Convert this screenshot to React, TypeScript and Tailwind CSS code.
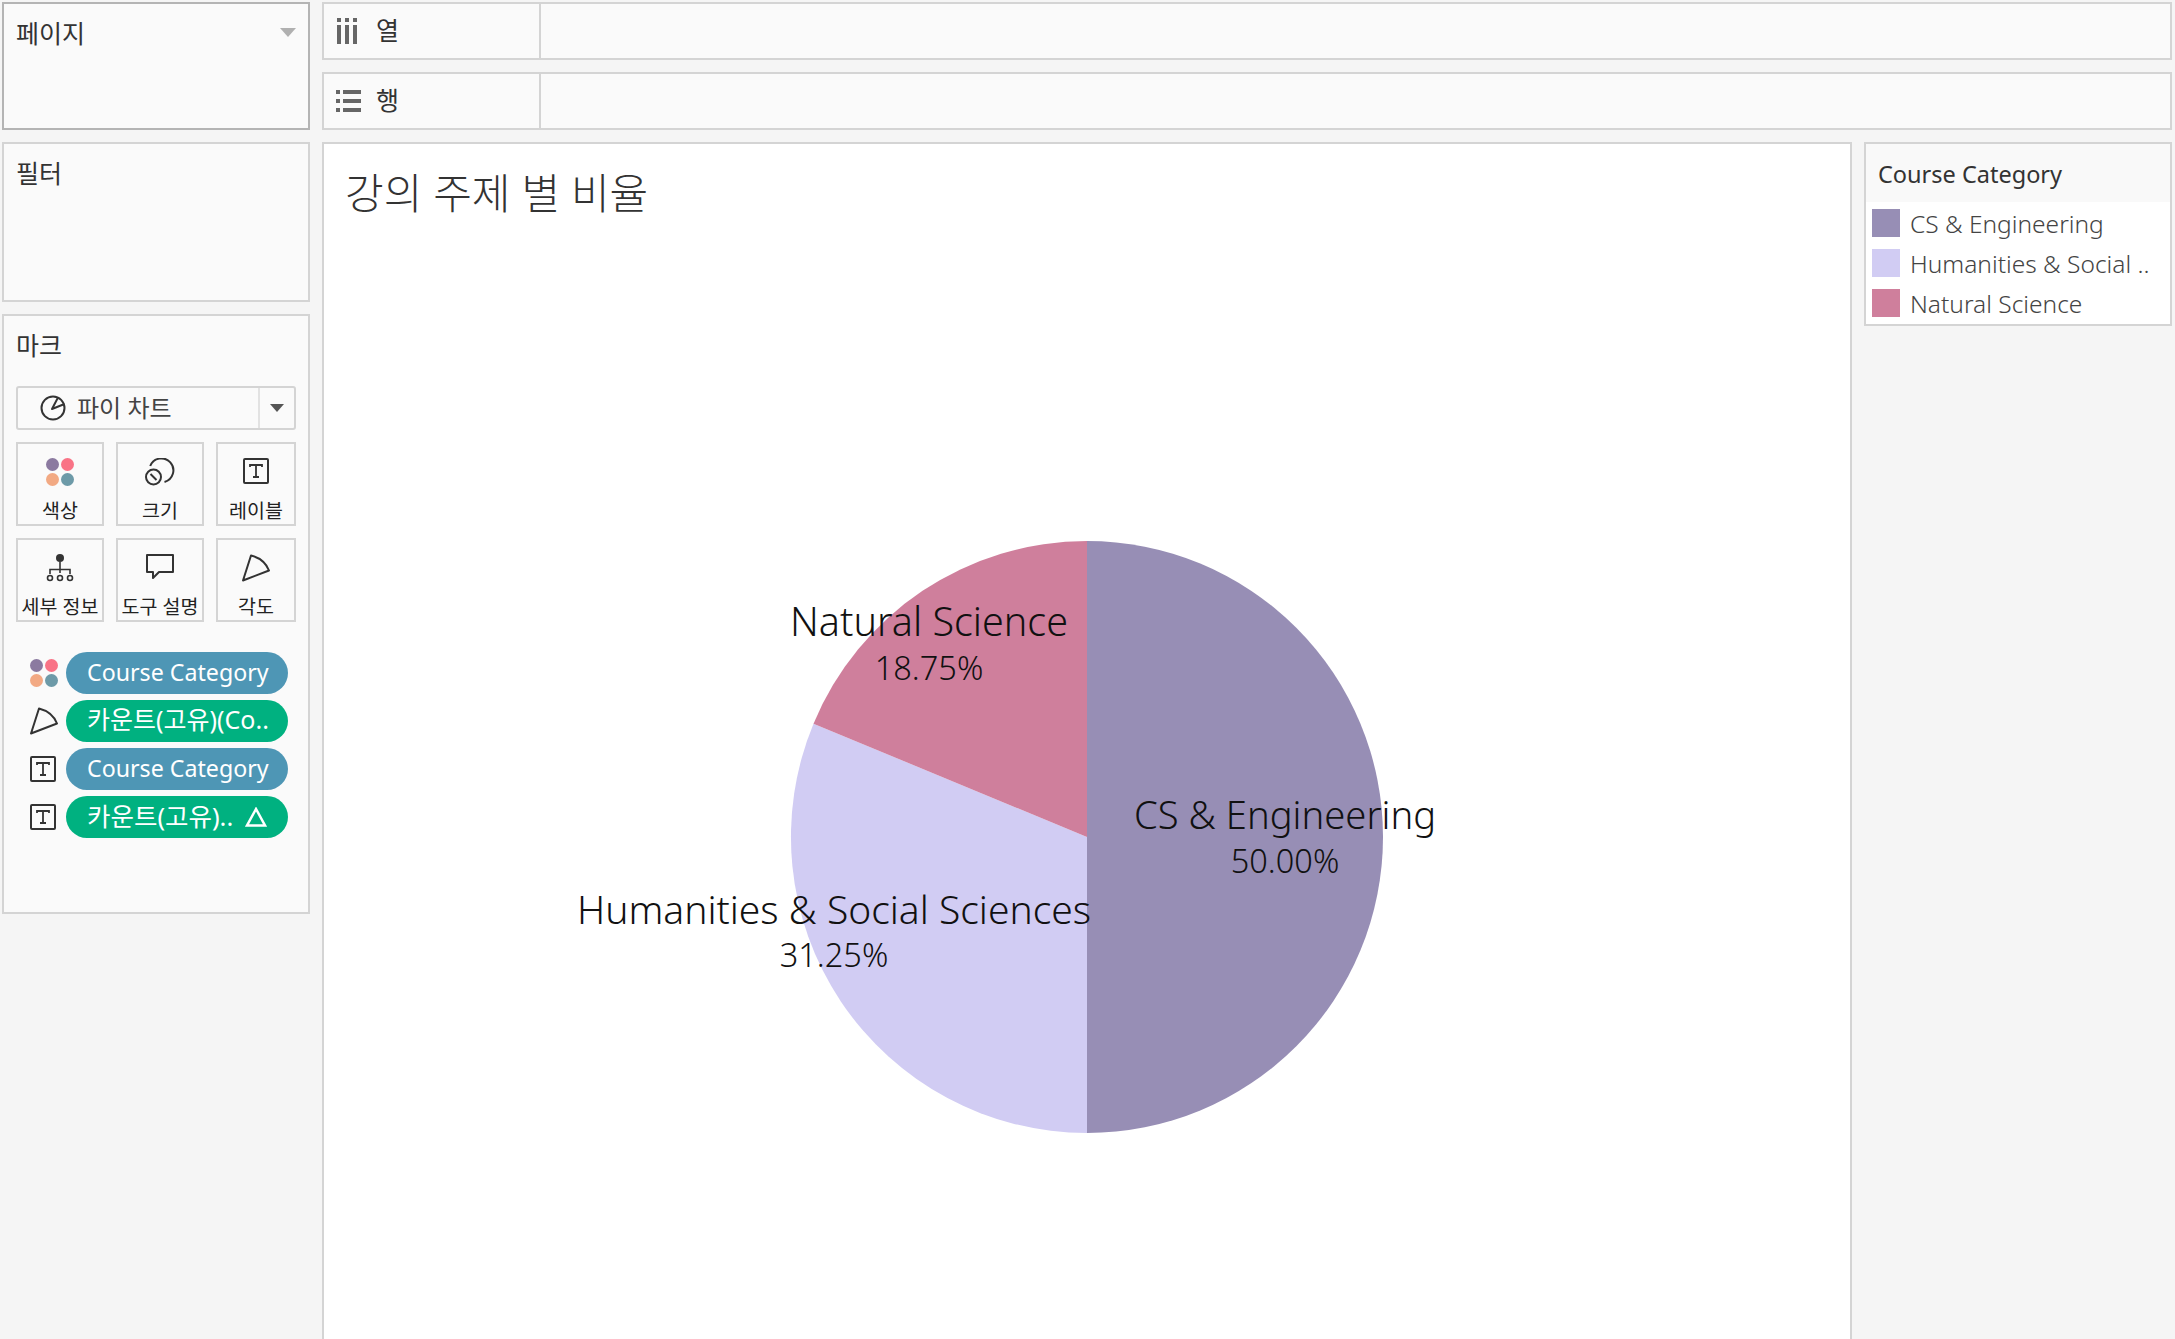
const FONT = "font-['Noto_Sans','Noto_Sans_CJK_KR',sans-serif]";

function ColorDots({ className = '' }: { className?: string }) {
  return (
    <svg viewBox="0 0 28 28" className={className}>
      <circle cx="6.5" cy="6.5" r="6.5" fill="#8b7aa0" />
      <circle cx="21.5" cy="6.5" r="6.5" fill="#f97386" />
      <circle cx="6.5" cy="21.5" r="6.5" fill="#f2a983" />
      <circle cx="21.5" cy="21.5" r="6.5" fill="#6d9aa8" />
    </svg>
  );
}

function TextIcon({ className = '' }: { className?: string }) {
  return (
    <svg viewBox="0 0 26 26" className={className} fill="none" stroke="#333">
      <rect x="1" y="1" width="24" height="24" rx="1" strokeWidth="2" />
      <path d="M7 9V7h12v2M13 7v12M10 19h6" strokeWidth="1.8" />
    </svg>
  );
}

function AngleIcon({ className = '' }: { className?: string }) {
  return (
    <svg viewBox="0 0 28 28" className={className} fill="none" stroke="#333" strokeWidth="2">
      <path d="M1 26.500 9 1.500C17 3.500 24 9 27 16.500Z" strokeLinejoin="round" />
    </svg>
  );
}

function SizeIcon({ className = '' }: { className?: string }) {
  return (
    <svg viewBox="0 0 30 28" className={className} fill="none" stroke="#333" strokeWidth="2">
      <path d="M5.200 8A12 12 0 1 1 19.500 24" />
      <circle cx="8.500" cy="19" r="7.500" />
      <path d="M5.500 16 11.500 22" />
    </svg>
  );
}

function DetailIcon({ className = '' }: { className?: string }) {
  return (
    <svg viewBox="0 0 28 28" className={className} fill="none" stroke="#333" strokeWidth="1.600">
      <circle cx="14" cy="4" r="4" fill="#333" stroke="none" />
      <path d="M14 8v11M4 20v-4.500h20V20" />
      <circle cx="4" cy="24" r="2.500" />
      <circle cx="14" cy="24" r="2.500" />
      <circle cx="24" cy="24" r="2.500" />
    </svg>
  );
}

function TooltipIcon({ className = '' }: { className?: string }) {
  return (
    <svg viewBox="0 0 30 26" className={className} fill="none" stroke="#333" strokeWidth="2">
      <path d="M2 1h26v17H14l-6 6v-6H2Z" strokeLinejoin="round" />
    </svg>
  );
}

function PieIcon({ className = '' }: { className?: string }) {
  return (
    <svg viewBox="0 0 26 26" className={className} fill="none" stroke="#333" strokeWidth="2">
      <circle cx="13" cy="13" r="11.500" />
      <path d="M18 2.500 12 14 24.500 9" strokeLinejoin="round" />
    </svg>
  );
}

function Panel({ title, className, children }: { title: string; className: string; children?: React.ReactNode }) {
  return (
    <div className={`relative border-2 bg-[#fafafa] ${className}`}>
      <div className="pl-[12px] text-[25px] leading-[34px] text-[#333]">{title}</div>
      {children}
    </div>
  );
}

function MarkCard({ label, w, children }: { label: string; w: string; children: React.ReactNode }) {
  return (
    <div className={`flex h-[84px] flex-col items-center border-2 border-[#d4d4d4] bg-[#fafafa] ${w}`}>
      <div className="flex h-[42px] items-start justify-center pt-[14px]">{children}</div>
      <div className="mt-[13px] whitespace-nowrap text-[19.500px] leading-[24px] text-[#222]">{label}</div>
    </div>
  );
}

function Pill({ color, size, children }: { color: string; size: string; children: React.ReactNode }) {
  return (
    <div className={`flex h-[42px] w-[222px] items-center rounded-full pb-[2px] pl-[21px] text-white ${size} ${color}`}>
      {children}
    </div>
  );
}

function Shelf({ label, icon }: { label: string; icon: React.ReactNode }) {
  return (
    <div className="flex h-[58px] border-2 border-[#d4d4d4] bg-[#fafafa]">
      <div className="flex w-[217px] items-center border-r-2 border-[#d4d4d4] pl-[12px]">
        <div className="flex w-[40px] items-center">{icon}</div>
        <span className="text-[25px] text-[#333]">{label}</span>
      </div>
    </div>
  );
}

const legend = [
  { label: 'CS & Engineering', color: 'bg-[#978eb5]' },
  { label: 'Humanities & Social ..', color: 'bg-[#d1ccf3]' },
  { label: 'Natural Science', color: 'bg-[#cf7f9c]' },
];

function PieChart() {
  return (
    <svg width="1000" height="700" viewBox="0 0 1000 700" className="ml-[200px] mt-[324px] overflow-visible">
      <g transform="translate(563 296)">
        <path d="M0 0V-296A296 296 0 0 1 0 296Z" fill="#978eb5" />
        <path d="M0 0V296A296 296 0 0 1 -273.500 -113.300Z" fill="#d1ccf3" />
        <path d="M0 0L-273.500 -113.300A296 296 0 0 1 0 -296Z" fill="#cf7f9c" />
        <g textAnchor="middle" fill="#111" fontWeight="300">
          <text x="-158" y="-201" fontSize="39.500">Natural Science</text>
          <text x="-158" y="-157" fontSize="32.500">18.75%</text>
          <text x="198" y="-8" fontSize="38.200">CS &amp; Engineering</text>
          <text x="198" y="36" fontSize="32.500">50.00%</text>
          <text x="-253" y="87" fontSize="39">Humanities &amp; Social Sciences</text>
          <text x="-253" y="130" fontSize="32.500">31.25%</text>
        </g>
      </g>
    </svg>
  );
}

export default function App() {
  return (
    <div className={`flex h-[1339px] w-[2175px] gap-[12px] overflow-hidden bg-[#f5f5f5] pl-[2px] pr-[3px] pt-[2px] ${FONT}`}>
      <div className="flex w-[308px] shrink-0 flex-col gap-[12px]">
        <Panel title="페이지" className="h-[128px] border-[#b4b4b4] pt-[12px]">
          <div className="absolute right-[12px] top-[24px] h-0 w-0 border-x-[8px] border-t-[9px] border-x-transparent border-t-[#b0b0b0]" />
        </Panel>
        <Panel title="필터" className="h-[160px] border-[#d4d4d4] pt-[12px]" />
        <div className="flex h-[600px] flex-col border-2 border-[#d4d4d4] bg-[#fafafa] pl-[12px] pt-[12px]">
          <div className="text-[25px] leading-[34px] text-[#333]">마크</div>
          <div className="mt-[24px] flex h-[44px] w-[280px] items-center rounded-[3px] border-2 border-[#d4d4d4]">
            <div className="flex flex-1 items-center gap-[11px] pl-[22px] text-[24px] text-[#444]">
              <PieIcon className="h-[26px] w-[26px]" />
              <span>파이 차트</span>
            </div>
            <div className="flex h-full w-[36px] items-center justify-center border-l-2 border-[#e2e2e2]">
              <div className="h-0 w-0 border-x-[7px] border-t-[8px] border-x-transparent border-t-[#555]" />
            </div>
          </div>
          <div className="mt-[12px] flex gap-[12px]">
            <MarkCard label="색상" w="w-[88px]"><ColorDots className="h-[28px] w-[28px]" /></MarkCard>
            <MarkCard label="크기" w="w-[88px]"><SizeIcon className="h-[28px] w-[30px]" /></MarkCard>
            <MarkCard label="레이블" w="w-[80px]"><TextIcon className="h-[26px] w-[26px]" /></MarkCard>
          </div>
          <div className="mt-[12px] flex gap-[12px]">
            <MarkCard label="세부 정보" w="w-[88px]"><DetailIcon className="h-[28px] w-[28px]" /></MarkCard>
            <MarkCard label="도구 설명" w="w-[88px]"><TooltipIcon className="h-[26px] w-[30px]" /></MarkCard>
            <MarkCard label="각도" w="w-[80px]"><AngleIcon className="h-[28px] w-[28px]" /></MarkCard>
          </div>
          <div className="mt-[30px] flex flex-col gap-[6px]">
            <div className="flex items-center gap-[8px] pl-[14px]">
              <ColorDots className="h-[28px] w-[28px]" />
              <Pill color="bg-[#4e96b5]" size="text-[23.200px]">Course Category</Pill>
            </div>
            <div className="flex items-center gap-[8px] pl-[14px]">
              <AngleIcon className="h-[28px] w-[28px]" />
              <Pill color="bg-[#00b180]" size="text-[25px]">카운트(고유)(Co..</Pill>
            </div>
            <div className="flex items-center gap-[10px] pl-[14px]">
              <TextIcon className="h-[26px] w-[26px]" />
              <Pill color="bg-[#4e96b5]" size="text-[23.200px]">Course Category</Pill>
            </div>
            <div className="flex items-center gap-[10px] pl-[14px]">
              <TextIcon className="h-[26px] w-[26px]" />
              <Pill color="bg-[#00b180]" size="text-[25.500px]">
                <span>카운트(고유)..</span>
                <svg viewBox="0 0 22 20" className="ml-[12px] mt-[2px] h-[20px] w-[22px]" fill="none" stroke="#fff" strokeWidth="2.500">
                  <path d="M11 2 2 18.500h18Z" />
                </svg>
              </Pill>
            </div>
          </div>
        </div>
      </div>

      <div className="flex flex-1 flex-col gap-[12px]">
        <div className="flex flex-col gap-[12px]">
          <Shelf
            label="열"
            icon={
              <svg viewBox="0 0 22 26" className="h-[26px] w-[22px]" fill="#666">
                <rect x="1" y="0" width="4" height="4" /><rect x="9" y="0" width="4" height="4" /><rect x="17" y="0" width="4" height="4" />
                <rect x="1" y="7" width="4" height="19" /><rect x="9" y="7" width="4" height="19" /><rect x="17" y="7" width="4" height="19" />
              </svg>
            }
          />
          <Shelf
            label="행"
            icon={
              <svg viewBox="0 0 25 22" className="h-[22px] w-[25px]" fill="#666">
                <rect x="0" y="0" width="4" height="4" /><rect x="7" y="0" width="18" height="4" />
                <rect x="0" y="9" width="4" height="4" /><rect x="7" y="9" width="18" height="4" />
                <rect x="0" y="18" width="4" height="4" /><rect x="7" y="18" width="18" height="4" />
              </svg>
            }
          />
        </div>
        <div className="flex flex-1 gap-[12px]">
          <div className="w-[1530px] shrink-0 overflow-hidden border-2 border-b-0 border-[#d4d4d4] bg-white">
            <div className="pl-[21px] pt-[25px] text-[42px] font-light leading-[48px] text-[#333]">강의 주제 별 비율</div>
            <PieChart />
          </div>
          <div className="h-[184px] flex-1 border-2 border-[#d4d4d4] bg-white">
            <div className="flex h-[58px] items-center bg-[#f9f9f9] pl-[12px] pt-[3px] text-[23.500px] text-[#333]">Course Category</div>
            <div className="flex flex-col gap-[12px] pl-[6px] pt-[7px]">
              {legend.map((item) => (
                <div key={item.label} className="flex h-[28px] items-center gap-[10px]">
                  <div className={`h-[28px] w-[28px] ${item.color}`} />
                  <span className="whitespace-nowrap pt-[2px] text-[24.500px] font-light text-[#444]">{item.label}</span>
                </div>
              ))}
            </div>
          </div>
        </div>
      </div>
    </div>
  );
}
